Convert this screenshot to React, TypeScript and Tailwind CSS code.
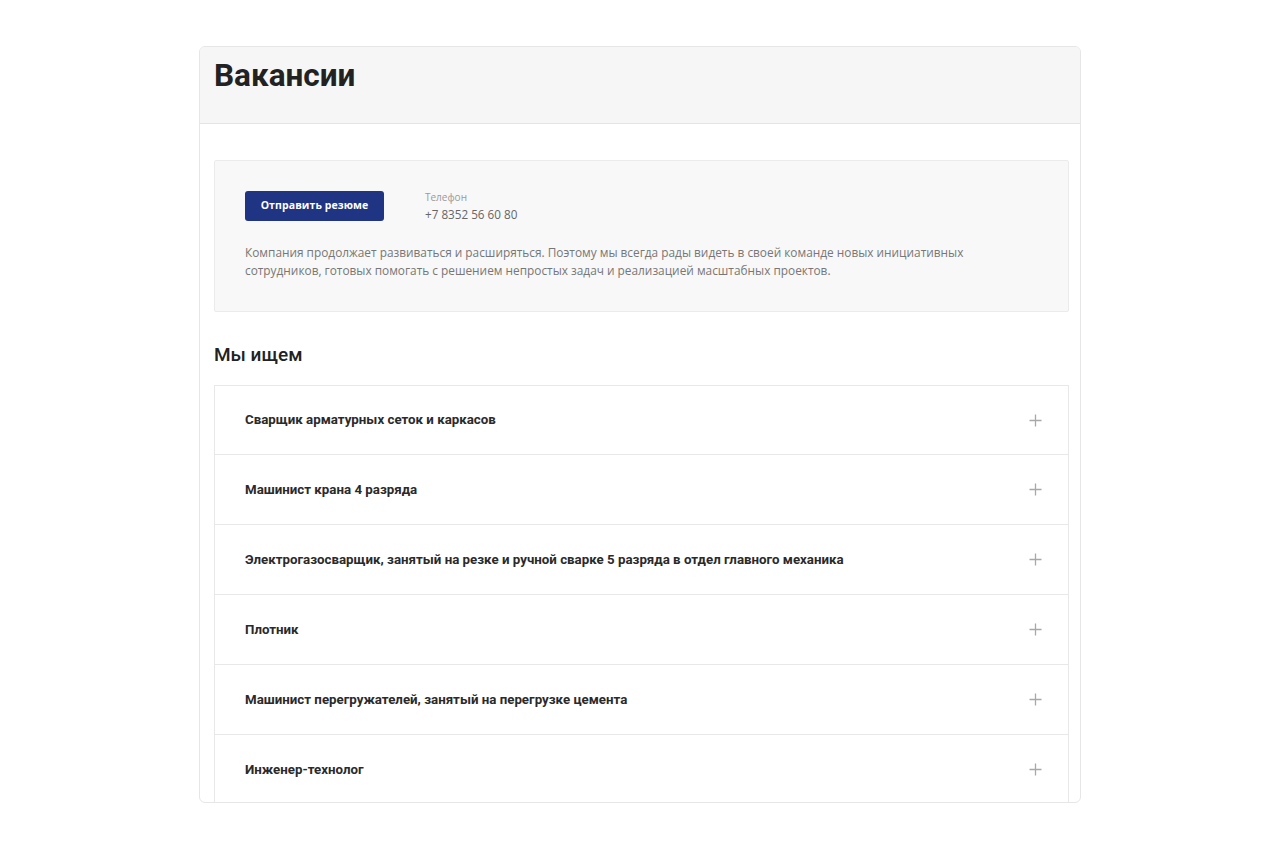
import React from 'react';

const vacancies = [
  'Сварщик арматурных сеток и каркасов',
  'Машинист крана 4 разряда',
  'Электрогазосварщик, занятый на резке и ручной сварке 5 разряда в отдел главного механика',
  'Плотник',
  'Машинист перегружателей, занятый на перегрузке цемента',
  'Инженер-технолог',
];

function Plus() {
  return (
    <svg width="13" height="13" viewBox="0 0 13 13" className="shrink-0">
      <path d="M6.5 0.5v12M0.5 6.5h12" stroke="#a8a8a8" strokeWidth="1.3" fill="none" />
    </svg>
  );
}

export default function App() {
  return (
    <div className="min-h-screen bg-white pt-[46px] font-['Roboto',sans-serif]">
      <div className="mx-auto w-[882px] h-[757px] overflow-hidden rounded-md border border-[#e6e6e6] bg-white">
        {/* header */}
        <div className="h-[77px] bg-[#f6f6f6] border-b border-[#e4e4e4] px-[14px] pt-[11px]">
          <h1 className="text-[31.5px] leading-[36px] font-bold text-[#222222]">Вакансии</h1>
        </div>

        <div className="pl-[14px] pr-[11px] pt-[36px]">
          {/* info box */}
          <div className="bg-[#f8f8f8] border border-[#ebebeb] rounded-[2px] px-[30px] pt-[30px] pb-[32px] font-['Open_Sans',sans-serif]">
            <div className="flex items-start gap-[41px]">
              <button className="w-[139px] h-[30px] rounded-[3px] bg-[#1f3482] text-white text-[10.5px] font-bold tracking-[0.1px]">
                Отправить резюме
              </button>
              <div>
                <div className="text-[10px] leading-[12px] text-[#9a9a9a]">Телефон</div>
                <div className="mt-[3px] text-[11.7px] leading-[16px] text-[#666666]">+7 8352 56 60 80</div>
              </div>
            </div>
            <p className="mt-[21px] text-[11.85px] leading-[18px] text-[#777777] max-w-[740px]">
              Компания продолжает развиваться и расширяться. Поэтому мы всегда рады видеть в своей команде новых инициативных сотрудников, готовых помогать с решением непростых задач и реализацией масштабных проектов.
            </p>
          </div>

          <h2 className="mt-[31px] text-[19px] leading-[24px] font-medium text-[#222222]">Мы ищем</h2>

          {/* accordion */}
          <div className="mt-[18px] border border-[#e8e8e8]">
            {vacancies.map((v, i) => (
              <div
                key={v}
                className={`flex items-center justify-between pl-[30px] pr-[26px] ${i > 0 ? 'h-[70px] border-t border-[#e8e8e8]' : 'h-[68px]'}`}
              >
                <span className="text-[13.3px] font-bold text-[#2a2a2a]">{v}</span>
                <Plus />
              </div>
            ))}
          </div>
        </div>
      </div>
    </div>
  );
}
